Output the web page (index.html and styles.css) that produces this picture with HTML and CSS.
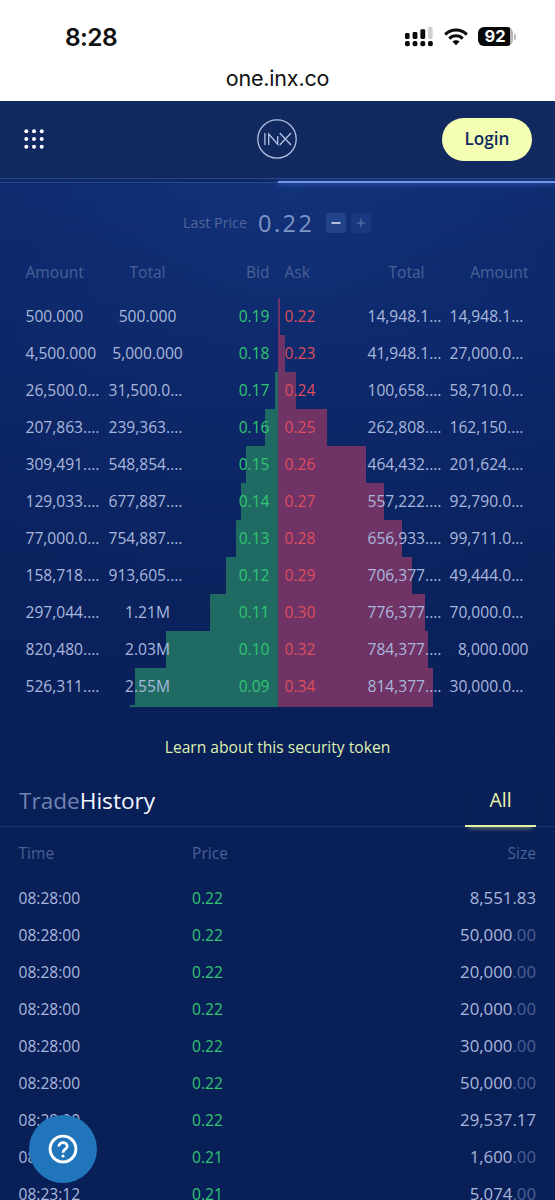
FILE: index.html
```
<!DOCTYPE html>
<html lang="en">
<head>
<meta charset="utf-8">
<title>INX One</title>
<link rel="stylesheet" href="styles.css">
</head>
<body>
<div class="phone">
  <div class="statusbar">
    <span class="clock">8:28</span>
    <div class="indicators">
      <svg class="signal" width="28" height="20" viewBox="0 0 28 20">
        <g fill="#0a0a0a">
          <rect x="0" y="6" width="4.6" height="6" rx="1.4"/><rect x="7.6" y="5" width="4.8" height="7" rx="1.4"/><rect x="15.4" y="2.2" width="4.8" height="9.8" rx="1.4"/>
          <rect x="0" y="14" width="4.8" height="5.2" rx="1.8"/><rect x="7.6" y="14" width="4.8" height="5.2" rx="1.8"/><rect x="15.4" y="14" width="4.8" height="5.2" rx="1.8"/><rect x="23" y="14" width="4.8" height="5.2" rx="1.8"/>
        </g>
        <rect x="23" y="0" width="4.6" height="12" rx="1.4" fill="#cfcfcf"/>
      </svg>
      <svg class="wifi" width="24" height="18" viewBox="0 0 24 18">
        <g fill="none" stroke="#0a0a0a" stroke-width="3">
          <path d="M1.2 6.6C7.2 .4 16.8 .4 22.8 6.6"/>
          <path d="M5.3 10.6C9.2 6.8 14.8 6.8 18.7 10.6"/>
        </g>
        <path d="M8.4 13.6C10.4 11.8 13.6 11.8 15.6 13.6L12 17.3Z" fill="#0a0a0a"/>
      </svg>
      <div class="battery"><span class="level">92</span><i class="cap"></i></div>
    </div>
  </div>
  <div class="address">one.inx.co</div>

  <header class="topbar">
    <svg class="menu" width="20" height="20" viewBox="0 0 20 20" fill="#fff">
      <circle cx="2.3" cy="2.3" r="2"/><circle cx="10" cy="2.3" r="2"/><circle cx="17.7" cy="2.3" r="2"/>
      <circle cx="2.3" cy="10" r="2"/><circle cx="10" cy="10" r="2"/><circle cx="17.7" cy="10" r="2"/>
      <circle cx="2.3" cy="17.7" r="2"/><circle cx="10" cy="17.7" r="2"/><circle cx="17.7" cy="17.7" r="2"/>
    </svg>
    <svg class="logo" width="40" height="40" viewBox="0 0 40 40" fill="none" stroke="#b4c2e4" stroke-width="1.3">
      <circle cx="20" cy="20" r="19.2"/>
      <path d="M7.9 14v12M11.7 26V15l9 10.2V17M22.7 14l11.3 12M34 14L22.7 26"/>
    </svg>
    <button class="login">Login</button>
  </header>
  <div class="tabs"><i class="tab-active"></i></div>

  <main class="content">
    <div class="lastprice">
      <span class="lp-label">Last Price</span>
      <span class="lp-value">0.22</span>
      <span class="step on"><svg width="10" height="10"><path d="M.5 5h9" stroke="#e3eafb" stroke-width="1.5"/></svg></span>
      <span class="step"><svg width="10" height="10"><path d="M.8 5h8.4M5 .8v8.4" stroke="#6379ae" stroke-width="1.1"/></svg></span>
    </div>
    <div class="book-row head"><span>Amount</span><span class="mid">Total</span><span class="bid">Bid</span><span class="ask">Ask</span><span class="mid">Total</span><span class="end">Amount</span></div>
    <section class="book" id="book"></section>
    <a class="learn">Learn about this security token</a>

    <div class="history-title">
      <h2><span>Trade</span>History</h2>
      <span class="all">All</span>
    </div>
    <div class="trade head"><span>Time</span><span>Price</span><span class="size">Size</span></div>
    <section class="trades" id="trades"></section>
  </main>

  <div class="help">
    <svg width="30" height="30" viewBox="0 0 30 30" fill="none" stroke="#fff" stroke-width="2.9">
      <circle cx="15" cy="15" r="12.9"/>
      <path d="M10.8 12.6C10.8 7.4 19.2 7.4 19.2 12.2C19.2 15.3 15 15.1 15 18.7" stroke-width="2.7"/>
      <circle cx="15" cy="22" r="1.6" fill="#fff" stroke="none"/>
    </svg>
  </div>
</div>
<script src="app.js"></script>
</body>
</html>
```

FILE: styles.css
```
* { box-sizing: border-box; }
body { margin: 0; font-family: "Open Sans", "Noto Sans", sans-serif; }
.phone { position: relative; width: 555px; height: 1200px; overflow: hidden; background: #fff; display: flex; flex-direction: column; }
.statusbar { height: 62px; flex: none; display: flex; justify-content: space-between; padding: 0 39px 0 65px; font-family: Inter, sans-serif; }
.clock { font-size: 24.5px; font-weight: 600; line-height: 30px; padding-top: 22px; color: #111; letter-spacing: -.6px; }
.indicators { display: flex; align-items: flex-start; padding-top: 27px; }
.wifi { margin-left: 11px; margin-top: 1px; }
.battery { display: flex; align-items: center; margin-left: 10px; }
.level { width: 35px; height: 19px; border-radius: 6px; background: linear-gradient(90deg, #080808 32px, #b5b5b5 32px); color: #fff; font-weight: 700; font-size: 16.5px; line-height: 19px; text-align: center; padding-right: 1px; }
.cap { width: 2px; height: 6px; margin-left: 1px; border-radius: 0 2px 2px 0; background: #b5b5b5; }
.address { height: 38.5px; flex: none; text-align: center; font-family: Inter, sans-serif; font-size: 21.5px; line-height: 32px; color: #111; letter-spacing: -.2px; }
.topbar { height: 78px; flex: none; background: #11295f; border-bottom: 1px solid #2a4687; display: grid; grid-template-columns: 1fr 40px 1fr; align-items: center; padding: 0 23px 0 24px; }
.menu { justify-self: start; }
.logo { margin-left: -1px; }
.login { justify-self: end; width: 90px; height: 43px; border: 0; border-radius: 22px; background: #f5ffb3; color: #11295f; font: 600 17.2px "Open Sans", sans-serif; padding: 0 0 1px; }
.tabs { height: 4px; flex: none; background: #0f2868; border-bottom: 1px solid #29468a; display: flex; align-items: flex-end; justify-content: flex-end; }
.tab-active { width: 277.5px; height: 2px; margin-bottom: -1px; background: #6e97e8; box-shadow: 0 1px 5px #3f6bd0; z-index: 1; position: relative; }
.content { flex: 1; min-height: 0; background: linear-gradient(#091f5800, #091f58 560px), radial-gradient(ellipse 460px 680px at 52% 0, #12327a, #0d276a); }
.lastprice { height: 81px; display: flex; align-items: center; padding-left: 183px; color: #8498c8; }
.lp-label { font-size: 14.3px; color: #506599; width: 75px; padding-bottom: 2px; }
.lp-value { font-size: 23.5px; letter-spacing: 2.5px; width: 68px; line-height: 30px; font-weight: 400; color: #7f94c6; }
.step { width: 20px; height: 20px; border-radius: 2px; background: #1a387f; display: grid; place-items: center; margin-right: 5px; }
.step.on { background: #224289; }
.book-row { height: 37px; display: grid; grid-template-columns: 82px 80px 82px 1fr 80px 82px; align-items: center; padding: 0 26.5px 0 25.5px; font-size: 15.6px; line-height: 22px; color: #a9b7dc; white-space: nowrap; position: relative; }
.book-row.head, .trade.head { color: #4a6096; font-size: 15.6px; }
.book-row.head { align-items: start; height: 37px; margin-top: -3px; }
.mid { text-align: center; }
.mid.cut { text-align: left; padding-left: 1px; }
.bid { text-align: right; }
.ask { padding-left: 15px; }
.end { text-align: right; }
.end.cut { text-align: left; padding-left: 3px; }
.book-row:not(.head) .bid { color: #32c471; }
.book-row:not(.head) .ask { color: #dd4d5d; }
.book { height: 409px; }
.book-row > span { position: relative; z-index: 1; }
.bars { position: absolute; inset: 0; display: flex; }
.bars i { display: block; height: 100%; }
.bars .half { width: 277.5px; display: flex; flex: none; }
.bars .buy { background: #1f6b63; margin-left: auto; }
.bars .sell { background: #703365; }
.tail { height: 2px; position: relative; }
.learn { display: block; text-align: center; height: 78px; padding-top: 27px; font-size: 15.62px; line-height: 26px; color: #dff0b0; }
.history-title { height: 42px; display: flex; justify-content: space-between; border-bottom: 1px solid #1b3270; padding: 0 19px; }
h2 { margin: 0; font-size: 22.6px; line-height: 32px; font-weight: 400; color: #f4f7ff; }
h2 span { color: #7183b2; }
.all { width: 71px; height: 42px; border-bottom: 2px solid #e9f3a6; box-shadow: 0 5px 5px -4px #d9e79a88; text-align: center; font-size: 19.5px; line-height: 30px; color: #edf8ad; }
.trade { height: 37px; display: grid; grid-template-columns: 173.5px 1fr 1fr; align-items: center; padding: 0 19px 0 18.5px; font-size: 15.6px; line-height: 22px; color: #a9b7dc; }
.trade.head { height: 53px; }
.size { text-align: right; }
.trades .size { font-size: 16.8px; }
.price { color: #32c471; }
.zero { color: #4a6096; }
.help { position: absolute; left: 28.5px; top: 1114.5px; width: 68.5px; height: 68.5px; border-radius: 50%; background: #2175bb; display: grid; place-items: center; }
```

FILE: app.js
```
// amount, total, bid, buy width, ask, sell width, total, amount
const book = [
  ["500.000", "500.000", "0.19", 0, "0.22", 2.5, "14,948.1…", "14,948.1…"],
  ["4,500.000", "5,000.000", "0.18", 0, "0.23", 7.5, "41,948.1…", "27,000.0…"],
  ["26,500.0…", "31,500.0…", "0.17", 2.5, "0.24", 18, "100,658.…", "58,710.0…"],
  ["207,863.…", "239,363.…", "0.16", 13, "0.25", 49.5, "262,808.…", "162,150.…"],
  ["309,491.…", "548,854.…", "0.15", 31.5, "0.26", 88, "464,432.…", "201,624.…"],
  ["129,033.…", "677,887.…", "0.14", 36.5, "0.27", 106, "557,222.…", "92,790.0…"],
  ["77,000.0…", "754,887.…", "0.13", 41.5, "0.28", 124, "656,933.…", "99,711.0…"],
  ["158,718.…", "913,605.…", "0.12", 52, "0.29", 134.5, "706,377.…", "49,444.0…"],
  ["297,044.…", "1.21M", "0.11", 67.5, "0.30", 147.5, "776,377.…", "70,000.0…"],
  ["820,480.…", "2.03M", "0.10", 111.5, "0.32", 150.5, "784,377.…", "8,000.000"],
  ["526,311.…", "2.55M", "0.09", 142.5, "0.34", 155.5, "814,377.…", "30,000.0…"]
];
const cut = t => t.endsWith("…") ? " cut" : "";
const bars = (b, s) => `<div class="bars"><div class="half"><i class="buy" style="width:${b}px"></i></div><i class="sell" style="width:${s}px"></i></div>`;
document.getElementById("book").innerHTML = book.map(([a, t, b, bw, k, sw, t2, a2]) =>
  `<div class="book-row">${bars(bw, sw)}<span>${a}</span><span class="mid${cut(t)}">${t}</span><span class="bid">${b}</span><span class="ask">${k}</span><span class="mid${cut(t2)}">${t2}</span><span class="end${cut(a2)}">${a2}</span></div>`
).join("") + `<div class="tail">${bars(147.5, 155.5)}</div>`;

const trades = [
  ["08:28:00", "0.22", "8,551.83"], ["08:28:00", "0.22", "50,000.00"], ["08:28:00", "0.22", "20,000.00"],
  ["08:28:00", "0.22", "20,000.00"], ["08:28:00", "0.22", "30,000.00"], ["08:28:00", "0.22", "50,000.00"],
  ["08:28:00", "0.22", "29,537.17"], ["08:28:00", "0.21", "1,600.00"], ["08:23:12", "0.21", "5,074.00"]
];
document.getElementById("trades").innerHTML = trades.map(([t, p, s]) =>
  `<div class="trade"><span>${t}</span><span class="price">${p}</span><span class="size">${s.replace(".00", '<span class="zero">.00</span>')}</span></div>`
).join("");
```
